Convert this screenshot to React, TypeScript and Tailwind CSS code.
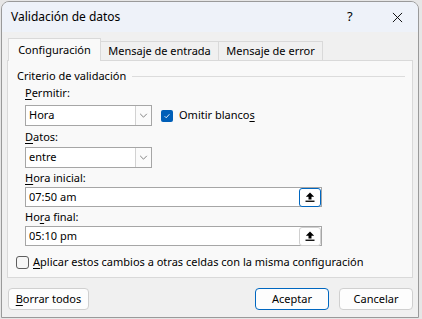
import React from 'react'

const font = { fontFamily: '"Noto Sans", "Segoe UI", sans-serif' }

function U({ children }: { children: React.ReactNode }) {
  return <span className="underline underline-offset-2 decoration-1">{children}</span>
}

function Label({ children }: { children: React.ReactNode }) {
  return <div className="flex h-[18px] items-center">{children}</div>
}

function Select({ value }: { value: string }) {
  return (
    <div className="flex h-[21px] w-[127px] border border-[#a6a6a6] bg-white">
      <div className="flex flex-1 items-center pl-[3px] text-black">{value}</div>
      <div className="flex w-[16px] items-center justify-center border-l border-[#d2d2d2] bg-[#fbfbfb]">
        <svg viewBox="0 0 10 6" className="h-[5px] w-[9px]" fill="none">
          <path d="M1 1l4 4 4-4" stroke="#6b6b6b" strokeWidth="1" />
        </svg>
      </div>
    </div>
  )
}

function RefInput({ value, focused }: { value: string; focused?: boolean }) {
  return (
    <div className="flex h-[20px] w-[297px] items-center border border-[#a6a6a6] bg-white">
      <div className="flex-1 pl-[3px] text-black">{value}</div>
      <div
        className={`flex h-[19px] w-[22px] items-center justify-center rounded-[3px] border bg-white ${
          focused ? 'border-[1.5px] border-[#0067c0]' : 'border-[#d0d0d0]'
        }`}
      >
        <svg viewBox="0 0 12 12" className="h-[12px] w-[12px]">
          <path d="M6 1.5L1.8 5.8h2.7V8.5h3V5.8h2.7z" fill="#000" />
          <rect x="1.5" y="9.6" width="9" height="1.3" fill="#000" />
        </svg>
      </div>
    </div>
  )
}

function Button({ children, primary }: { children: React.ReactNode; primary?: boolean }) {
  return (
    <div
      className={`flex h-[22px] items-center justify-center rounded-[4px] border bg-[#fdfdfd] text-black ${
        primary ? 'border-[#0067c0]' : 'border-[#d0d0d0]'
      }`}
    >
      {children}
    </div>
  )
}

export default function App() {
  return (
    <div className="h-[319px] w-[422px] overflow-hidden bg-[#e6e6e6] pl-[1px] pt-[1px]" style={font}>
      <div className="flex h-[317px] w-[418px] flex-col overflow-hidden rounded-t-[8px] border border-[#9a9a9a] bg-[#f0f0f0] text-[11px]">
        {/* title bar */}
        <div className="flex h-[30px] shrink-0 items-center bg-[#eef2f9] pl-[9px] text-[12px] text-black">
          <span className="flex-1">Validación de datos</span>
          <span className="w-[14px] text-[13px]">?</span>
          <svg viewBox="0 0 12 12" className="ml-[31px] mr-[15px] h-[11px] w-[11px]" fill="none">
            <path d="M1 1l10 10M11 1L1 11" stroke="#000" strokeWidth="1" />
          </svg>
        </div>

        {/* tabs */}
        <div className="mt-[6px] flex h-[22px] items-end pl-[6px] text-black">
          <div className="relative z-10 -mb-px flex h-[23px] w-[93px] items-center justify-center border border-b-0 border-[#d9d9d9] bg-[#f9f9f9]">
            Configuración
          </div>
          <div className="flex h-[19px] w-[118px] items-center justify-center border border-b-0 border-l-0 border-[#d9d9d9] bg-[#f0f0f0]">
            Mensaje de entrada
          </div>
          <div className="flex h-[19px] w-[104px] items-center justify-center border border-b-0 border-l-0 border-[#d9d9d9] bg-[#f0f0f0]">
            Mensaje de error
          </div>
        </div>

        {/* panel */}
        <div className="mx-[5px] flex h-[218px] flex-col border border-[#d9d9d9] bg-[#f9f9f9] text-black">
          <div className="mt-[7px] flex h-[16px] items-center pl-[9px] pr-[7px]">
            <span>Criterio de validación</span>
            <div className="ml-[6px] h-px flex-1 bg-[#dcdcdc]" />
          </div>

          <div className="flex flex-col pl-[17px]">
            <Label>
              <span>
                <U>P</U>ermitir:
              </span>
            </Label>
            <div className="mt-[3px] flex items-center">
              <Select value="Hora" />
              <div className="ml-[9px] flex h-[12px] w-[12px] items-center justify-center rounded-[2px] bg-[#005fb8]">
                <svg viewBox="0 0 10 10" className="h-[8px] w-[8px]" fill="none">
                  <path d="M2 5.2l2 2 4-4.4" stroke="#fff" strokeWidth="1.1" />
                </svg>
              </div>
              <span className="ml-[6px]">
                Omitir blanco<U>s</U>
              </span>
            </div>

            <div className="mt-[2px]">
              <Label>
                <span>
                  <U>D</U>atos:
                </span>
              </Label>
            </div>
            <div className="mt-px">
              <Select value="entre" />
            </div>

            <div className="mt-px">
              <Label>
                <span>
                  <U>H</U>ora inicial:
                </span>
              </Label>
            </div>
            <RefInput value="07:50 am" focused />

            <div className="mt-px">
              <Label>
                <span>
                  Ho<U>r</U>a final:
                </span>
              </Label>
            </div>
            <RefInput value="05:10 pm" />
          </div>

          <div className="mt-[8px] flex items-center pl-[8px]">
            <div className="h-[13px] w-[13px] rounded-[3px] border border-[#5e5e5e] bg-[#f6f6f6]" />
            <span className="ml-[4px]">
              <U>A</U>plicar estos cambios a otras celdas con la misma configuración
            </span>
          </div>
        </div>

        {/* footer */}
        <div className="mt-[10px] flex pl-[6px] pr-[5px]">
          <div className="w-[81px]">
            <Button>
              <U>B</U>orrar todos
            </Button>
          </div>
          <div className="flex-1" />
          <div className="w-[74px]">
            <Button primary>Aceptar</Button>
          </div>
          <div className="ml-[10px] w-[74px]">
            <Button>Cancelar</Button>
          </div>
        </div>
      </div>
    </div>
  )
}
